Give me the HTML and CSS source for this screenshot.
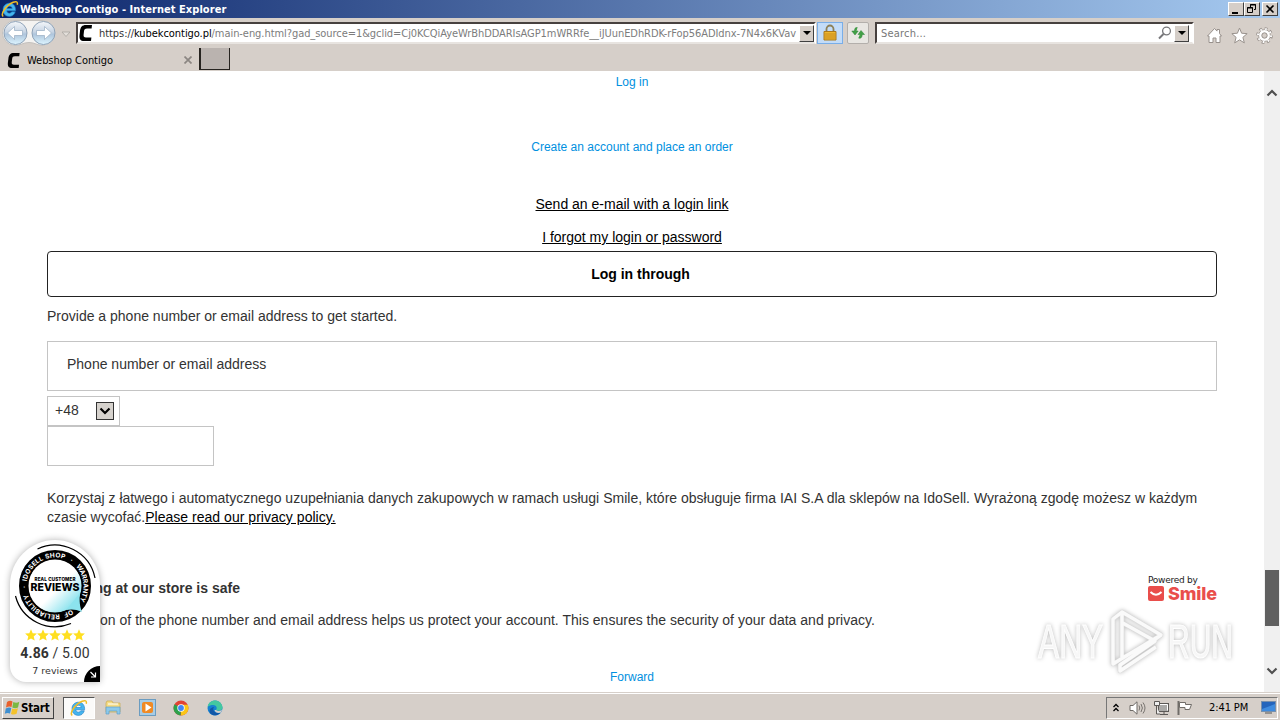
FILE: index.html
```
<!DOCTYPE html>
<html lang="en">
<head>
  <meta charset="UTF-8">
  <meta name="viewport" content="width=device-width, initial-scale=1.0">
  <title>Webshop Contigo</title>
  <link rel="stylesheet" href="styles.css">
</head>
<body>
  <!-- Reusable shapes -->
  <svg class="defs" width="0" height="0">
    <symbol id="ie" viewBox="0 0 18 18">
      <path d="M14.6 10.8H5.8c.3 2.6 3.6 3.2 5 1h3.5c-1 3.2-3.2 4.6-5.8 4.6-3.900 0-6.500-2.700-6.500-6.700 0-3.900 2.800-6.500 6.500-6.500 4 0 6.400 3 6.100 7.600zM5.900 8.500h5.300c-.4-3-4.700-3-5.300 0z" fill="#45b4ee" stroke="#1f7dc4" stroke-width=".6"/>
      <path d="M2.200 16.500c-3-2.500 3-11.500 10-14.300 3-1.200 4.800-.5 4 2.600" fill="none" stroke="#f0bd27" stroke-width="1.500"/>
    </symbol>
    <symbol id="contigo" viewBox="0 0 14 16">
      <path d="M13 0H7C3 0 1.500 2 1 6L.500 10c-.5 4 1 6 4.500 6h7l.4-3.600H7c-2 0-2.600-.8-2.400-2.700l.4-3.400C5.200 4.300 6 3.500 8 3.500h4.600z"/>
    </symbol>
    <symbol id="star" viewBox="0 0 12 12">
      <path d="M6 .3l1.700 3.900 4.200.4-3.200 2.800 1 4.200L6 9.400l-3.700 2.200 1-4.200L.1 4.600l4.200-.4z"/>
    </symbol>
  </svg>

  <div class="window">
    <!-- Title bar -->
    <header class="titlebar">
      <svg class="title-icon" width="18" height="18"><use href="#ie"/></svg>
      <span class="title-text">Webshop Contigo - Internet Explorer</span>
      <div class="window-buttons">
        <span class="win-btn"><svg width="14" height="12"><path d="M3 9h6v2H3z"/></svg></span>
        <span class="win-btn"><svg width="14" height="12"><path d="M5.500 4V1.500h5v5H9M5 2h6M2.500 4.500h5v5h-5zM2 5h6" fill="none" stroke="#000"/></svg></span>
        <span class="win-btn last"><svg width="14" height="12"><path d="M3.500 2.500l7 7M10.500 2.500l-7 7" stroke="#000" stroke-width="1.600"/></svg></span>
      </div>
    </header>

    <!-- Address row -->
    <div class="navbar">
      <svg class="nav-arrows" width="76" height="30" viewBox="0 0 76 30">
        <defs>
          <linearGradient id="glass" x1="0" y1="0" x2="0" y2="1">
            <stop offset="0" stop-color="#f4f7fa"/><stop offset=".45" stop-color="#c8d5e4"/><stop offset=".55" stop-color="#aec5dc"/><stop offset="1" stop-color="#ddf5ff"/>
          </linearGradient>
        </defs>
        <path d="M15 2.500h28a13 13 0 0 1 0 25c-6 0-8-3-14-3s-8 3-14 3a12.500 12.500 0 0 1 0-25z" fill="#f4f3f1" stroke="#c4c1be"/>
        <circle cx="15.500" cy="15" r="11.500" fill="url(#glass)" stroke="#8fa3b8"/>
        <circle cx="43.500" cy="15" r="11.500" fill="url(#glass)" stroke="#8fa3b8"/>
        <path d="M7.500 15l7-6.500v4h8v5h-8v4z" fill="#fff" stroke="#9fb4c8" stroke-width=".8"/>
        <path d="M51.500 15l-7-6.500v4h-8v5h8v4z" fill="#fff" stroke="#9fb4c8" stroke-width=".8"/>
        <path d="M62 14h8l-4 4.500z" fill="#e3dfda" stroke="#aaa6a1" stroke-width=".8"/>
      </svg>
      <div class="address">
        <svg class="favicon" width="14" height="16"><use href="#contigo"/></svg>
        <div class="url">
          <span class="url-scheme">https://<b>kubekcontigo.pl</b></span><span class="url-rest">/main-eng.html?gad_source=1&amp;gclid=Cj0KCQiAyeWrBhDDARIsAGP1mWRRfe__iJUunEDhRDK-rFop56ADIdnx-7N4x6KVav</span>
        </div>
        <span class="drop-btn"></span>
      </div>
      <span class="tool lock">
        <svg width="16" height="18" viewBox="0 0 16 18"><path d="M4.500 8V5a3.500 3.500 0 0 1 7 0v3" fill="none" stroke="#8d8057" stroke-width="1.800"/><path d="M2 7.500h12V16H2z" fill="#eeb72d" stroke="#aa781c"/><path d="M2.500 10h11M2.500 12h11M2.500 14h11" stroke="#c78a1f"/></svg>
      </span>
      <span class="tool refresh">
        <svg width="16" height="16" viewBox="0 0 16 16"><path d="M7.500 2.500C5 2 4.500 4 4.500 6H1.800L5 10l3.200-4H6.500M8.500 13c2.500 1 3.700-1 3.700-3.500h2.300L11 5.500 8 9.500h1.800" fill="#43a047" stroke="#278332" stroke-width=".5"/></svg>
      </span>
      <div class="search">
        <span class="search-text">Search...</span>
        <svg width="14" height="14" viewBox="0 0 14 14"><circle cx="8.500" cy="5" r="3.900" fill="none" stroke="#77777a" stroke-width="1.300"/><path d="M5.500 8L1 12.500" stroke="#77777a" stroke-width="2"/></svg>
        <span class="drop-btn"></span>
      </div>
      <div class="commands">
        <svg width="17" height="17" viewBox="0 0 17 17"><path d="M1.500 9l7-7.500 2.500 2.600V2.500h2.500v4L15.500 9H14v6.500h-4V11H7v4.500H3V9z" fill="#fff" stroke="#98918c"/></svg>
        <svg width="17" height="17" viewBox="0 0 12 12"><path d="M6 .8l1.500 3.600 3.900.3-3 2.600 1 3.900L6 9.100l-3.400 2.100 1-3.900-3-2.600 3.900-.3z" fill="#fff" stroke="#98918c" stroke-width=".7"/></svg>
        <svg width="17" height="17" viewBox="0 0 17 17"><circle cx="8.500" cy="8.500" r="6.600" fill="none" stroke="#98918c" stroke-width="3.400" stroke-dasharray="2.590 2.590"/><circle cx="8.500" cy="8.500" r="5.900" fill="#fff" stroke="#98918c" stroke-width=".8"/><circle cx="8.500" cy="8.500" r="6.500" fill="none" stroke="#fff" stroke-width="2" stroke-dasharray="1.600 3.500"/><circle cx="8.500" cy="8.500" r="2.700" fill="#d5cec8" stroke="#98918c"/></svg>
      </div>
    </div>

    <!-- Tabs -->
    <div class="tabs">
      <div class="tab">
        <svg class="favicon" width="14" height="15"><use href="#contigo"/></svg>
        <span class="tab-title">Webshop Contigo</span>
        <svg class="tab-close" width="8" height="8"><path d="M.5.5l7 7M7.500.5l-7 7" stroke="#8b8682" stroke-width="1.700"/></svg>
      </div>
      <div class="new-tab"></div>
    </div>

    <!-- Page -->
    <div class="viewport">
      <main class="page">
        <a class="small-link login">Log in</a>
        <a class="small-link create">Create an account and place an order</a>
        <a class="text-link send"><span>Send an e-mail with a login link</span></a>
        <a class="text-link forgot"><span>I forgot my login or password</span></a>
        <div class="login-through">Log in through</div>
        <p class="intro">Provide a phone number or email address to get started.</p>
        <div class="field">Phone number or email address</div>
        <div class="prefix">
          <span>+48</span>
          <span class="prefix-arrow"><svg width="16" height="16"><path d="M3.500 5.500L8 10l4.500-4.500" fill="none" stroke="#000" stroke-width="2.200"/></svg></span>
        </div>
        <div class="phone"></div>
        <p class="consent">Korzystaj z łatwego i automatycznego uzupełniania danych zakupowych w ramach usługi Smile, które obsługuje firma IAI S.A dla sklepów na IdoSell. Wyrażoną zgodę możesz w każdym<br>czasie wycofać.<a class="policy">Please read our privacy policy.</a></p>
        <div class="safe">
          <h3>Shopping at our store is safe</h3>
          <div class="powered">
            <span class="powered-text">Powered by</span>
            <div class="smile">
              <svg width="16" height="15" viewBox="0 0 16 15"><rect width="16" height="15" rx="2" fill="#e94e4b"/><path d="M2.500 6q5.500 5.500 11 0" fill="none" stroke="#fff" stroke-width="1.900"/></svg>
              <span>Smile</span>
            </div>
          </div>
        </div>
        <p class="verify">Verification of the phone number and email address helps us protect your account. This ensures the security of your data and privacy.</p>
        <a class="small-link forward">Forward</a>
      </main>
      <div class="scrollbar">
        <svg width="12" height="8"><path d="M1.500 6.500L6 2l4.500 4.500" fill="none" stroke="#505050" stroke-width="2.200"/></svg>
        <div class="thumb"></div>
        <svg width="12" height="8"><path d="M1.500 1.500L6 6l4.500-4.500" fill="none" stroke="#505050" stroke-width="2.200"/></svg>
      </div>

      <!-- Reviews badge -->
      <aside class="reviews">
        <svg class="seal" width="84" height="84" viewBox="-42 -42 84 84">
          <defs>
            <linearGradient id="aqua" x1="0" y1="0" x2="1" y2="1"><stop offset=".55" stop-color="#fff"/><stop offset=".85" stop-color="#8ce3ee"/></linearGradient>
            <path id="ring" d="M17.200 22.800A28.560 28.560 0 0 1 -17.200 -22.800A28.560 28.560 0 0 1 17.200 22.800"/>
          </defs>
          <path d="M-17.500-37A41 41 0 0 1 40-8M-39.500 10A41 41 0 0 0 16 37.500" fill="none" stroke="#000" stroke-width="1.200"/>
          <circle r="31" fill="#fff" stroke="#000" stroke-width="10"/>
          <circle r="26.500" fill="url(#aqua)"/>
          <path d="M25 7c-1 8 0 14 2 19-6-3-11-3-16-2z" fill="#8ce3ee"/>
          <g class="ring-text">
            <text><textPath href="#ring" startOffset="1" textLength="9">OF</textPath></text>
            <text><textPath href="#ring" startOffset="14" textLength="41">RELIABILITY</textPath></text>
            <text><textPath href="#ring" startOffset="61">·</textPath></text>
            <text><textPath href="#ring" startOffset="67.500" textLength="50">IDOSELL SHOP</textPath></text>
            <text><textPath href="#ring" startOffset="123">·</textPath></text>
            <text><textPath href="#ring" startOffset="131" textLength="37">WARRANTY</textPath></text>
          </g>
          <text class="seal-small" x="0" y="-5" textLength="41">REAL CUSTOMER</text>
          <text class="seal-big" x="0" y="5" textLength="49" lengthAdjust="spacingAndGlyphs">REVIEWS</text>
        </svg>
        <div class="stars">
          <svg width="12" height="12"><use href="#star"/></svg><svg width="12" height="12"><use href="#star"/></svg><svg width="12" height="12"><use href="#star"/></svg><svg width="12" height="12"><use href="#star"/></svg><svg width="12" height="12"><use href="#star"/></svg>
        </div>
        <div class="score"><b>4.86</b> / 5.00</div>
        <div class="count">7 reviews</div>
        <span class="collapse"><svg width="16" height="16"><path d="M6.500 6l5 5M7 11h4.500V6.500" fill="none" stroke="#fff" stroke-width="1.200"/></svg></span>
      </aside>

      <!-- Watermark -->
      <div class="watermark">
        <span class="wm-any">ANY</span>
        <svg width="58" height="68" viewBox="0 0 58 68" fill="none" stroke-linejoin="round">
          <path id="play" d="M14 50V5l39 23-7 5M14 5L5 12v45l8-5 40-24M13 15l34 19-35 24v6l36-24" stroke="#dcdcdc" stroke-width="4.400"/>
          <path d="M14 50V5l39 23-7 5M14 5L5 12v45l8-5 40-24M13 15l34 19-35 24v6l36-24" stroke="#fafafa" stroke-width="3.400"/>
        </svg>
        <span class="wm-run">RUN</span>
      </div>
    </div>

    <!-- Taskbar -->
    <footer class="taskbar">
      <div class="start">
        <svg width="17" height="17" viewBox="0 0 17 17"><path d="M3 3q3-2 5.500-.5L7.500 8Q5 7 2 8.500z" fill="#e8602c"/><path d="M9.300 3q3 1.500 6-.2L14 8.500Q11 10 8.300 8.500z" fill="#7bb842"/><path d="M1.800 9.500Q5 8 7.300 9L6 14.500Q3.500 13.300.8 14.800z" fill="#3f8fd0"/><path d="M8.200 9.500q3 1.300 5.700-.2l-1.300 5.500Q10 16.300 7 15z" fill="#f4c22b"/></svg>
        <span>Start</span>
      </div>
      <div class="task active"><svg width="18" height="18"><use href="#ie"/></svg></div>
      <div class="task"><svg width="16" height="16" viewBox="0 0 16 16"><path d="M1 3l1-2h5l1 2h7v9H1z" fill="#f5dc84" stroke="#c9a94e" stroke-width=".7"/><path d="M3 4h10" stroke="#fff"/><path d="M1 7h14v7h-3v-3H4v3H1z" fill="#8cc9ea" stroke="#5e9fca" stroke-width=".7"/></svg></div>
      <div class="task"><svg width="17" height="17" viewBox="0 0 17 17"><rect x=".5" y=".5" width="16" height="16" fill="#a6cce6" stroke="#6b9cc0"/><rect x="3" y="3" width="11" height="11" rx="2" fill="#f08a24"/><path d="M6.500 4.500l6 4-6 4z" fill="#fff"/></svg></div>
      <div class="task"><svg width="16" height="16" viewBox="0 0 16 16"><circle cx="8" cy="8" r="7.500" fill="#e24234"/><path d="M8 8L1.500 4.300A7.500 7.500 0 0 0 7.500 15.500z" fill="#2ca24c"/><path d="M8 8v7.500A7.500 7.500 0 0 0 14.700 4.700H8z" fill="#fbc617"/><circle cx="8" cy="8" r="3.700" fill="#fff"/><circle cx="8" cy="8" r="2.900" fill="#4285f4"/></svg></div>
      <div class="task"><svg width="16" height="16" viewBox="0 0 16 16"><circle cx="8" cy="8" r="7.500" fill="#1681d1"/><path d="M.6 7C1.500-1.500 14-2 15.500 7c.5 3.500-4 4.500-6.500 3 2-3-.5-5-3-5C4 5 2 5.500.6 7z" fill="#44c8a0"/><path d="M7 7c-2 2.500 0 6.500 6 6-2.500 3-7.500 3-9.500.5C1.500 11 3 7.500 7 7z" fill="#1257a7"/><path d="M9 10c2 1.500 5 1 6.300-.7L14 12.500c-3 1-6 0-6.500-2.500z" fill="#d6cfc9"/></svg></div>
      <div class="tray">
        <svg width="8" height="10"><path d="M1.500 4L4 1.500 6.500 4M1.500 8L4 5.500 6.500 8" fill="none" stroke="#000" stroke-width="1.300"/></svg>
        <svg class="speaker" width="17" height="14" viewBox="0 0 17 14"><path d="M1 4.500h3L8 .8v12.400L4 9.500H1z" fill="#fff" stroke="#6e6a66"/><path d="M10 4.500q1.500 2.500 0 5M12 3q2.800 4 0 8M14 1.500q4 5.500 0 11" fill="none" stroke="#77736f"/></svg>
        <svg class="network" width="17" height="16" viewBox="0 0 17 16"><rect x="5.500" y="3.500" width="10" height="8" fill="#aaa9a7" stroke="#5c5956"/><path d="M6.500 4.500h8v6" fill="none" stroke="#fff"/><path d="M7 14.500h8M11 12v2" stroke="#5c5956"/><path d="M1.500 1.500h5v4h-5zM3.500 6v8H7" fill="#eee" stroke="#5c5956"/></svg>
        <svg class="flag" width="17" height="16" viewBox="0 0 17 16"><path d="M1.500 1v14" stroke="#706c68" stroke-width="2"/><path d="M2.500 2.500h6v2h6l-2 5H8v-2H2.500z" fill="#fff" stroke="#706c68"/></svg>
        <span class="clock">2:41 PM</span>
        <svg class="desktop" width="15" height="13"><rect x=".5" y=".5" width="14" height="10" fill="#2465bc" stroke="#768fac"/><path d="M1 8L14 3v7H1z" fill="#3f8cdf"/><path d="M4 12h7" stroke="#555"/></svg>
      </div>
    </footer>
  </div>
</body>
</html>
```

FILE: styles.css
```
* {
  box-sizing: border-box;
}

body {
  margin: 0;
  font-family: "Liberation Sans", Arial, sans-serif;
  background: #fff;
  overflow: hidden;
}

svg {
  display: block;
  flex-shrink: 0;
}

.defs {
  position: absolute;
}

.window {
  display: flex;
  flex-direction: column;
  width: 1280px;
  height: 720px;
}

/* Title bar */
.titlebar {
  display: flex;
  align-items: center;
  height: 18px;
  padding: 0 2px 0 1px;
  background: linear-gradient(90deg, #0b256b, #a6caf0);
}

.title-text {
  flex: 1;
  padding-left: 1px;
  color: #fff;
  font: bold 11px "DejaVu Sans Condensed", sans-serif;
  letter-spacing: 0.05px;
}

.window-buttons {
  display: flex;
}

.win-btn {
  width: 16px;
  height: 14px;
  background: #d5cec8;
  border: 1px solid;
  border-color: #fff #404040 #404040 #fff;
}

.win-btn.last {
  margin-left: 2px;
}

/* Address row */
.navbar {
  display: flex;
  height: 30px;
  background: #d6cfc9;
}

.address,
.search {
  display: flex;
  align-items: center;
  height: 22px;
  margin-top: 4px;
  background: #fff;
  border: 2px solid;
  border-color: #47413f #fff #e8e4e0 #47413f;
  font: 11px "DejaVu Sans Condensed", sans-serif;
}

.address {
  width: 740px;
  padding-left: 1px;
}

.favicon {
  flex-shrink: 0;
}

.url {
  width: 698px;
  margin-left: 6px;
  overflow: hidden;
  white-space: nowrap;
  color: #7c7c7c;
}

.url-scheme {
  color: #333;
  letter-spacing: -0.06px;
}

.url-scheme b {
  font-weight: normal;
  color: #000;
}

.url-rest {
  letter-spacing: -0.06px;
}

.drop-btn {
  display: flex;
  align-items: center;
  justify-content: center;
  flex-shrink: 0;
  width: 15px;
  height: 17px;
  background: #d5cec8;
  border: 1px solid;
  border-color: #fff #404040 #404040 #fff;
}

.address .drop-btn {
  margin-left: auto;
}

.drop-btn::after {
  content: "";
  border: 4px solid transparent;
  border-top-color: #000;
  border-bottom: 0;
}

.tool {
  display: flex;
  align-items: center;
  justify-content: center;
  height: 22px;
  margin-top: 4px;
}

.lock {
  width: 26px;
  margin-left: 1px;
  background: #c3dcf8;
  border: 1px solid #79aee8;
}

.refresh {
  width: 22px;
  margin-left: 4px;
  background: #e8e6e2;
  border: 1px solid #b3afab;
  border-radius: 2px;
}

.search {
  width: 319px;
  margin-left: 6px;
  padding-right: 3px;
}

.search-text {
  flex: 1;
  padding-left: 4px;
  color: #777;
  letter-spacing: 0.2px;
}

.search .drop-btn {
  margin-left: 2px;
}

.commands {
  display: flex;
  gap: 8px;
  margin: 9px 0 0 12px;
}

/* Tabs */
.tabs {
  display: flex;
  height: 23px;
  background: #d6cfc9;
}

.tab {
  display: flex;
  align-items: center;
  width: 199px;
  padding: 1px 7px 0 7px;
}

.tab-title {
  flex: 1;
  margin-left: 6px;
  font: 11px "DejaVu Sans Condensed", sans-serif;
  letter-spacing: -0.05px;
}

.new-tab {
  width: 31px;
  height: 22px;
  background: #bab3af;
  border: 1px solid #26231f;
  border-width: 0 1px 1px 2px;
}

/* Page */
.viewport {
  display: flex;
  position: relative;
  height: 621px;
  overflow: hidden;
}

.page {
  display: flex;
  flex-direction: column;
  width: 1264px;
  padding: 1px 47px 0;
  font-size: 14px;
  line-height: 20px;
  color: #333;
}

.page p,
.page h3 {
  margin: 0;
  white-space: nowrap;
}

.small-link {
  font-size: 12px;
  text-align: center;
  color: #0090e0;
}

.text-link {
  text-align: center;
  color: #000;
}

.text-link span,
.policy {
  color: #000;
  text-decoration: underline;
}

.policy {
  letter-spacing: 0.03px;
}

.create {
  margin-top: 45px;
}

.send {
  margin-top: 37px;
}

.forgot {
  margin-top: 13px;
}

.login-through {
  height: 46px;
  margin-top: 4px;
  padding-left: 17px;
  border: 1px solid #222;
  border-radius: 4px;
  font-weight: bold;
  line-height: 44px;
  text-align: center;
  color: #000;
}

.page .intro {
  margin-top: 9px;
}

.field {
  height: 50px;
  margin-top: 15px;
  padding: 12px 19px;
  border: 1px solid #c4c4c4;
}

.prefix {
  display: flex;
  justify-content: space-between;
  width: 73px;
  height: 30px;
  margin-top: 5px;
  padding: 3px 5px 0 7px;
  border: 1px solid #c4c4c4;
}

.prefix-arrow {
  height: 18px;
  margin-top: 2px;
  border: 1px solid #333;
  background: #d6d2cd;
}

.phone {
  width: 167px;
  height: 40px;
  border: 1px solid #c4c4c4;
}

.page .consent {
  margin-top: 23px;
  line-height: 19px;
  letter-spacing: 0.006px;
}

.safe {
  display: flex;
  justify-content: space-between;
  height: 32px;
  margin-top: 47px;
}

.page h3 {
  padding-top: 4px;
  font-size: 14px;
}

.powered {
  width: 69px;
  color: #222;
}

.powered-text {
  display: block;
  padding-top: 1px;
  font: 9px/10px "DejaVu Sans", sans-serif;
  letter-spacing: -0.25px;
  white-space: nowrap;
}

.smile {
  display: flex;
  align-items: center;
  gap: 4px;
  height: 17px;
  color: #e94e4b;
  font: 800 18px/17px Inter, sans-serif;
  letter-spacing: -0.1px;
}

.page .verify {
  margin-top: 4px;
  letter-spacing: 0.015px;
}

.forward {
  margin-top: 37px;
}

.scrollbar {
  display: flex;
  flex-direction: column;
  align-items: center;
  width: 16px;
  padding: 18px 0 17px;
  background: #f0f0f0;
}

.thumb {
  width: 14px;
  height: 56px;
  margin: 473px 0 41px;
  background: #606060;
}

/* Reviews badge */
.reviews {
  position: absolute;
  left: 10px;
  top: 469px;
  display: flex;
  flex-direction: column;
  align-items: center;
  width: 90px;
  height: 142px;
  padding-top: 4px;
  background: #fff;
  border-radius: 45px 45px 0 16px;
  box-shadow: 0 0 7px rgba(0, 0, 0, 0.3);
  color: #333;
}

.ring-text {
  font: bold 6.5px Inter, sans-serif;
  fill: #fff;
}

.seal-small,
.seal-big {
  text-anchor: middle;
  font: 800 4.6px Inter, sans-serif;
}

.seal-big {
  font-size: 11px;
}

.stars {
  display: flex;
  margin-top: 1px;
  fill: #ffdf20;
}

.score {
  margin-top: 3px;
  font: 14px/18px Roboto, sans-serif;
  letter-spacing: 0.1px;
}

.count {
  margin-top: 2px;
  font: 9.5px/14px "DejaVu Sans", sans-serif;
}

.collapse {
  position: absolute;
  right: 0;
  bottom: 0;
  background: #000;
  border-top-left-radius: 16px;
}

/* Watermark */
.watermark {
  position: absolute;
  left: 1038px;
  top: 535px;
  display: flex;
  align-items: center;
  width: 196px;
  color: #f7f7f7;
  font: 48px/68px "Liberation Sans", sans-serif;
  filter: drop-shadow(0 0 2px #bbb);
}

.wm-any,
.wm-run {
  width: 66px;
  padding-top: 2px;
  transform: scaleX(0.66);
  transform-origin: left;
  -webkit-text-stroke: 1px #fff;
}

.wm-run {
  transform: scaleX(0.625);
}

.watermark svg {
  margin: 0 2px 0 4px;
}

/* Taskbar */
.taskbar {
  display: flex;
  align-items: center;
  height: 28px;
  padding: 2px 2px 0;
  background: #d6cfc9;
  border-top: 1px solid #d6cfc9;
  box-shadow: inset 0 1px #fff;
}

.start {
  display: flex;
  align-items: center;
  width: 52px;
  height: 22px;
  padding-left: 1px;
  border: 1px solid;
  border-color: #fff #404040 #404040 #fff;
  font: bold 11.5px "DejaVu Sans Condensed", sans-serif;
  letter-spacing: -0.2px;
}

.task {
  display: flex;
  align-items: center;
  justify-content: center;
  width: 32px;
  height: 22px;
  margin-right: 2px;
}

.task.active {
  margin-left: 9px;
  background: #fbfaf9;
  border: 1px solid;
  border-color: #555 #fff #fff #555;
}

.tray {
  display: flex;
  align-items: center;
  width: 172px;
  height: 22px;
  margin-left: auto;
  padding-left: 5px;
  border: 1px solid;
  border-color: #777 #fff #fff #777;
}

.speaker {
  margin-left: 9px;
}

.network {
  margin-left: 7px;
}

.flag {
  margin-left: 7px;
}

.clock {
  width: 42px;
  margin-left: 15px;
  font: 11px "DejaVu Sans Condensed", sans-serif;
  letter-spacing: -0.1px;
  white-space: nowrap;
}

.desktop {
  margin-left: 10px;
}
```
